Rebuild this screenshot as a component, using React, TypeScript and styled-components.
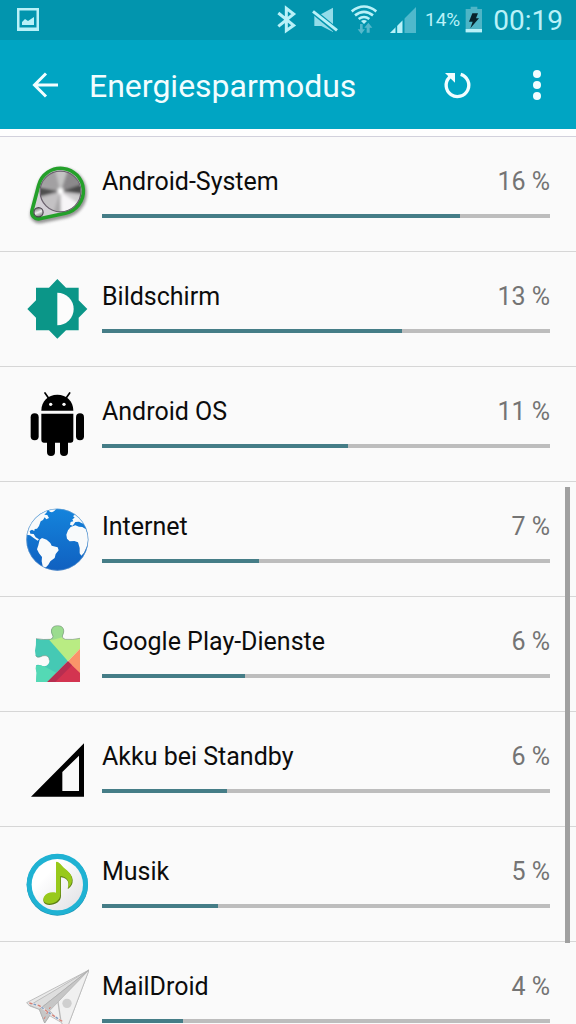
import React from "react";
import styled, { createGlobalStyle } from "styled-components";

const GlobalStyle = createGlobalStyle`
  *, *::before, *::after { box-sizing: border-box; }
  body { margin: 0; background: #fafafa; }
  body, button { font-family: Roboto, "Liberation Sans", sans-serif; }
`;

const Screen = styled.div`
  display: flex;
  flex-direction: column;
  height: 100vh;
  overflow: hidden;
  background: #fafafa;
`;

const StatusBar = styled.div`
  display: flex;
  flex: none;
  align-items: center;
  justify-content: space-between;
  height: 40px;
  padding: 0 13px 0 15px;
  background: #0295ae;
  color: #b9f1f8;
`;

const StatusGroup = styled.div`
  display: flex;
  align-items: center;
  gap: 13px;
`;

const StatusIcon = styled.svg`
  display: block;
  width: 26px;
  height: 30px;
`;

const Battery = styled.div`
  display: flex;
  align-items: center;
  gap: 5px;
  margin-left: -4px;
  font-size: 19px;
  line-height: 40px;
`;

const BatteryIcon = styled.svg`
  display: block;
  width: 18px;
  height: 30px;
`;

const Clock = styled.time`
  margin-left: -3px;
  padding-top: 2px;
  font-size: 28px;
  line-height: 38px;
`;

const AppBar = styled.header`
  display: flex;
  flex: none;
  align-items: center;
  height: 89px;
  padding: 0 15px 0 21px;
  background: #00a5c3;
  color: #f2fdff;
`;

const Title = styled.h1`
  flex: 1;
  margin: 0 0 0 20px;
  padding-top: 3px;
  font-size: 32px;
  font-weight: 400;
  line-height: 40px;
`;

const Actions = styled.div`
  display: flex;
  gap: 32px;
`;

const IconButton = styled.button`
  display: block;
  width: 48px;
  height: 48px;
  padding: 0;
  border: 0;
  background: none;
  color: inherit;

  svg { display: block; width: 48px; height: 48px; }
`;

const Content = styled.main`
  position: relative;
  flex: 1;
  min-height: 0;
  overflow: hidden;
`;

const Divider = styled.div`
  height: 8px;
  border-bottom: 1px solid #d2d1dc;
  background: #fefefe;
`;

const UsageList = styled.ul`
  margin: 0;
  padding: 0;
  list-style: none;
`;

const UsageRow = styled.li`
  display: flex;
  align-items: center;
  gap: 13px;
  height: 115px;
  padding: 0 26px 0 25px;
  border-bottom: 1px solid #d6d6d6;
`;

const AppIcon = styled.svg`
  display: block;
  flex: none;
  width: 64px;
  height: 64px;
`;

const Usage = styled.div`
  flex: 1;
  min-width: 0;
  padding-bottom: 5px;
`;

const UsageText = styled.div`
  display: flex;
  justify-content: space-between;
  margin-bottom: 16px;
  font-size: 25px;
  line-height: 32px;
`;

const Name = styled.label`
  color: #0c0c0c;
`;

const Percent = styled.span`
  color: #747474;
`;

const Meter = styled.progress`
  display: block;
  width: 100%;
  height: 4px;
  border: 0;
  appearance: none;
  background: #bdbdbd;

  &::-webkit-progress-bar { background: #bdbdbd; }
  &::-webkit-progress-value { background: #457d87; }
  &::-moz-progress-bar { background: #457d87; }
`;

const ScrollThumb = styled.div`
  position: absolute;
  top: 40%;
  right: 6px;
  width: 5px;
  height: 51%;
  background: #a0a0a0;
`;

const SystemIcon = () => (
  <AppIcon viewBox="0 0 64 64" aria-hidden="true">
    <defs>
      <clipPath id="disc"><circle cx="35.5" cy="29.5" r="20" /></clipPath>
      <filter id="soft" x="-20%" y="-20%" width="140%" height="140%"><feGaussianBlur stdDeviation="1.8" /></filter>
      <linearGradient id="knob" x1="0" y1="0" x2="0.4" y2="1">
        <stop offset="0" stopColor="#555" /><stop offset="0.6" stopColor="#eee" /><stop offset="1" stopColor="#888" />
      </linearGradient>
    </defs>
    <path d="M13.7 23.2A22.7 22.7 0 1 1 40.4 51.2L14.6 56.7A6.5 6.5 0 0 1 7 48.6Z" transform="translate(1 2)" fill="none" stroke="#666" strokeWidth="5" opacity=".7" filter="url(#soft)" />
    <path d="M13.7 23.2A22.7 22.7 0 1 1 40.4 51.2L14.6 56.7A6.5 6.5 0 0 1 7 48.6Z" fill="#d4d0d6" stroke="#24a02a" strokeWidth="3.6" />
    <g clipPath="url(#disc)">
      <rect x="14" y="8" width="44" height="44" fill="#b3b1b3" />
      <g filter="url(#soft)">
        <path d="M35.5 29.5L8 24V36Z" fill="#4e4e4e" />
        <path d="M35.5 29.5L62 20V32Z" fill="#4a4a4a" />
        <path d="M35.5 29.5L10 22V8L28 4Z" fill="#a2a0a2" />
        <path d="M35.5 29.5L44 4L60 8V20Z" fill="#8b898b" />
        <path d="M35.5 29.5L30 4H44Z" fill="#c4c4c4" />
        <path d="M35.5 29.5L10 38L14 60H26Z" fill="#c4c2c4" />
        <path d="M35.5 29.5L26 58H37Z" fill="#a9a7a9" />
        <path d="M35.5 29.5L36 58H54L58 44Z" fill="#f7f5f7" />
        <path d="M35.5 29.5L60 34V46Z" fill="#cfcdcf" />
        <circle cx="35.5" cy="29" r="3" fill="#fff" />
      </g>
    </g>
    <circle cx="35.5" cy="29.5" r="20.4" fill="none" stroke="#6a616d" strokeWidth="1.2" />
    <circle cx="13.5" cy="50.3" r="4.6" fill="url(#knob)" stroke="#4b454d" strokeWidth="1.2" />
  </AppIcon>
);

const DisplayIcon = () => (
  <AppIcon viewBox="75 51 192 192" aria-hidden="true">
    <path fill="#0b9688" d="M172 57L198 83H236V121L262 147L236 173V211H198L172 236L147 211H108V173L82 147L108 121V83H147Z" />
    <path fill="#fcfcfc" d="M172 98A49 49 0 0 1 172 196Z" />
  </AppIcon>
);

const AndroidIcon = () => (
  <AppIcon viewBox="75 51 192 192" aria-hidden="true">
    <path d="M124 107C124 78 144 59 172 59S220 78 220 107Z" />
    <path d="M135 54L146 70M209 54L198 70" stroke="#000" strokeWidth="5" strokeLinecap="round" />
    <circle cx="152" cy="88" r="5" fill="#fafafa" />
    <circle cx="192" cy="88" r="5" fill="#fafafa" />
    <path d="M124 116H220V196Q220 203 213 203H204V231A12 12 0 0 1 180 231V203H165V231A12 12 0 0 1 141 231V203H131Q124 203 124 196Z" />
    <rect x="92" y="115" width="24" height="81" rx="12" />
    <rect x="228" y="115" width="24" height="81" rx="12" />
  </AppIcon>
);

const GlobeIcon = () => (
  <AppIcon viewBox="75 51 192 192" aria-hidden="true">
    <defs>
      <linearGradient id="sea" x1="0" y1="0" x2="0" y2="1">
        <stop offset="0" stopColor="#1484dc" /><stop offset="1" stopColor="#1060c0" />
      </linearGradient>
      <clipPath id="globe"><circle cx="172" cy="149" r="92" /></clipPath>
    </defs>
    <circle cx="172" cy="149" r="93" fill="url(#sea)" />
    <g clipPath="url(#globe)" fill="#f8fafb">
      <path d="M76 55H138L141 66L133 74L142 75L147 84L139 88L134 82L129 90L122 94L117 108L111 116L104 117L103 123L96 119L89 123L91 131L101 132L107 142L117 148L113 152L101 144L90 136L76 134Z" />
      <path d="M145 57H168L163 63L156 67L149 65Z" />
      <path d="M119 149L126 144L140 149L151 159L155 167L173 172L176 181L167 192L164 204L151 214L145 224L138 232L129 233L125 214L126 201L117 190L111 178L115 166Z" />
      <path d="M216 66L232 72L249 91L255 102L246 100L237 95L226 96L218 107L210 104L212 96L220 94L217 88L224 83L219 78L225 74Z" />
      <path d="M212 111L226 106L237 110L247 111L258 118L266 142L262 166L252 188L244 197L239 190L239 174L234 157L223 153L209 154L201 146L199 134L204 121Z" />
    </g>
    <circle cx="172" cy="149" r="92" fill="none" stroke="#7ca7cf" strokeWidth="1.5" />
  </AppIcon>
);

const PlayIcon = () => (
  <AppIcon viewBox="75 51 192 192" aria-hidden="true">
    <defs>
      <clipPath id="puzzle">
        <path d="M108 101Q132 105 151 103Q160 101 159 93C149 75 156 62 173 62C190 62 196 76 187 93Q186 101 196 103Q218 105 240 100V231H108L110 203Q106 190 108 181Q113 178 122 181C138 189 149 178 148 166C148 153 136 148 122 155Q112 160 107 152L105 137Q109 122 108 101Z" />
      </clipPath>
    </defs>
    <g clipPath="url(#puzzle)">
      <path fill="#45c9b4" d="M100 55H155L204 169L140 234H100Z" />
      <path fill="#54d9b5" d="M100 185L125 180L170 204L140 234H100Z" />
      <path fill="#b9ec83" d="M140 55H245V126L204 169L146 103Z" />
      <path fill="#9bdc8f" d="M145 55H200V93L160 104H145Z" />
      <path fill="#fa9469" d="M204 169L241 130V207Z" />
      <path fill="#d33450" d="M204 169L241 205V232H141Z" />
      <path fill="#b62e50" d="M204 169L216 181L165 232H141Z" />
    </g>
    <path d="M108 101Q132 105 151 103Q160 101 159 93C149 75 156 62 173 62C190 62 196 76 187 93Q186 101 196 103Q218 105 240 100M148 166C148 153 136 148 122 155Q112 160 107 152" fill="none" stroke="#6d8878" strokeWidth="2.5" opacity=".7" />
  </AppIcon>
);

const SignalIcon = () => (
  <AppIcon viewBox="75 51 192 192" aria-hidden="true">
    <path fillRule="evenodd" d="M252 70V230H93ZM187 156V213H237V107Z" />
  </AppIcon>
);

const MusicIcon = () => (
  <AppIcon viewBox="75 51 192 192" aria-hidden="true">
    <defs>
      <linearGradient id="face" x1="0" y1="0" x2="1" y2="1">
        <stop offset="0.3" stopColor="#fff" /><stop offset="1" stopColor="#dfdfe3" />
      </linearGradient>
    </defs>
    <circle cx="172" cy="150" r="92" fill="#1b91b1" />
    <circle cx="172" cy="148" r="92" fill="#1fb2d3" />
    <circle cx="172" cy="149" r="77" fill="url(#face)" />
    <g>
      <path fill="#5c7f14" d="M168 84Q174 81 182 91C193 107 216 112 218 135Q219 152 203 163C209 145 206 130 183 127V181C184 200 166 210 148 210C132 210 126 198 133 187C140 176 154 172 168 176Z" />
      <path fill="#98c91b" d="M168 81Q174 78 182 88C193 104 214 110 216 132Q217 149 203 160C210 142 204 126 181 123V178C181 196 164 206 148 206C132 206 126 195 133 184C140 173 154 169 168 173Z" />
    </g>
  </AppIcon>
);

const MailIcon = () => (
  <AppIcon viewBox="75 399 192 192" aria-hidden="true">
    <defs>
      <linearGradient id="paper" x1="0" y1="0" x2="1" y2="1">
        <stop offset="0" stopColor="#d2d2d2" /><stop offset="0.5" stopColor="#f4f4f4" /><stop offset="1" stopColor="#dadada" />
      </linearGradient>
    </defs>
    <path d="M267 408L80 506L89 516L118 526L134 567L149 545L185 566L198 591Z" fill="url(#paper)" stroke="#b5b5b5" strokeWidth="2.5" strokeLinejoin="round" />
    <path d="M267 408L89 514L118 526Z" fill="#dedede" stroke="#ababab" strokeWidth="2" />
    <path d="M267 408L118 526L134 567L149 544Z" fill="#c6c6c6" stroke="#a6a6a6" strokeWidth="2" />
    <path d="M267 408L149 530L185 566L198 591Z" fill="#f0f0f0" stroke="#b1b1b1" strokeWidth="2" />
    <path d="M174 504L183 563" stroke="#b9b9b9" strokeWidth="4" />
    <circle cx="201" cy="508" r="14" fill="#cfcfcf" />
    <path d="M88 507L118 515L145 535L188 563" fill="none" stroke="#e9e5e5" strokeWidth="6" />
    <path d="M88 507L118 515L145 535L188 563" fill="none" stroke="#d58075" strokeWidth="4" strokeDasharray="10 16" />
    <path d="M88 507L118 515L145 535L188 563" fill="none" stroke="#7b9cc4" strokeWidth="4" strokeDasharray="8 18" strokeDashoffset="-13" />
    <path d="M132 555L151 519" stroke="#d58075" strokeWidth="3" strokeDasharray="8 9" />
  </AppIcon>
);

const apps = [
  { id: "system", name: "Android-System", percent: 16, level: 80, Icon: SystemIcon },
  { id: "display", name: "Bildschirm", percent: 13, level: 67, Icon: DisplayIcon },
  { id: "os", name: "Android OS", percent: 11, level: 55, Icon: AndroidIcon },
  { id: "internet", name: "Internet", percent: 7, level: 35, Icon: GlobeIcon },
  { id: "play", name: "Google Play-Dienste", percent: 6, level: 32, Icon: PlayIcon },
  { id: "standby", name: "Akku bei Standby", percent: 6, level: 28, Icon: SignalIcon },
  { id: "music", name: "Musik", percent: 5, level: 26, Icon: MusicIcon },
  { id: "mail", name: "MailDroid", percent: 4, level: 18, Icon: MailIcon },
];

export default function App() {
  return (
    <Screen>
      <GlobalStyle />
      <StatusBar>
        <StatusIcon viewBox="0 0 26 30" aria-hidden="true">
          <path fill="currentColor" fillRule="evenodd" d="M2 3H24V26H2ZM4.500 5.500V22.500H21.500V5.500Z" />
          <path fill="currentColor" d="M7 20V17L10 14L13 16L19 12V20Z" />
        </StatusIcon>
        <StatusGroup>
          <StatusIcon viewBox="40 15 78 90" aria-hidden="true">
            <path d="M56 39L102 76L80 92V25L102 42L56 79" fill="none" stroke="currentColor" strokeWidth="9" />
          </StatusIcon>
          <StatusIcon viewBox="156 15 78 90" aria-hidden="true">
            <path fill="#93dce9" d="M163 42H184L219 23V96L184 78H163Z" />
            <path d="M156 31L231 93" stroke="#0295ae" strokeWidth="17" />
            <path d="M159 34L231 91" stroke="currentColor" strokeWidth="9" />
          </StatusIcon>
          <StatusIcon viewBox="277 15 78 90" aria-hidden="true">
            <path d="M279 34Q316 5 353 34M289 46Q316 25 343 46M300 57Q316 45 332 57" fill="none" stroke="currentColor" strokeWidth="8" />
            <path fill="currentColor" d="M307 63Q316 57 325 63L316 72Z" />
            <path fill="#55b8cb" d="M304 72H312V88H319L308 102L297 88H304ZM324 98H333V83H341L329 68L317 83H324Z" />
          </StatusIcon>
          <StatusIcon viewBox="390 15 78 90" aria-hidden="true">
            <path fill="#4fb9cc" d="M468 21V99H390Z" />
            <path fill="currentColor" d="M427 62V99H390Z" />
            <path d="M409 70V100M431 55V100" stroke="#0295ae" strokeWidth="5" />
          </StatusIcon>
          <Battery>
            <span>14%</span>
            <BatteryIcon viewBox="616 15 54 90" aria-hidden="true">
              <path fill="#4fb5c6" d="M633 20H653V27H667V97H618V27H633Z" />
              <path fill="currentColor" d="M618 87H667V97H618Z" />
              <path fill="#07232b" d="M638 40H655L649 55H658L632 85L639 65H628Z" />
            </BatteryIcon>
          </Battery>
          <Clock>00:19</Clock>
        </StatusGroup>
      </StatusBar>
      <AppBar>
        <IconButton type="button" aria-label="Zurück">
          <svg viewBox="0 0 48 48" fill="none" stroke="currentColor" strokeWidth="3">
            <path d="M37 24H13M25 12.500L13.500 24L25 35.500" />
          </svg>
        </IconButton>
        <Title>Energiesparmodus</Title>
        <Actions>
          <IconButton type="button" aria-label="Aktualisieren">
            <svg viewBox="520 180 144 144">
              <path d="M603 220A34 34 0 1 1 569 229L577 224" fill="none" stroke="currentColor" strokeWidth="10" />
              <path fill="currentColor" d="M556 216H586V245Z" />
            </svg>
          </IconButton>
          <IconButton type="button" aria-label="Weitere Optionen">
            <svg viewBox="0 0 48 48" fill="currentColor">
              <circle cx="24" cy="13" r="4" />
              <circle cx="24" cy="24" r="4" />
              <circle cx="24" cy="35" r="4" />
            </svg>
          </IconButton>
        </Actions>
      </AppBar>
      <Content>
        <Divider />
        <UsageList>
          {apps.map(({ id, name, percent, level, Icon }) => (
            <UsageRow key={id}>
              <Icon />
              <Usage>
                <UsageText>
                  <Name htmlFor={id}>{name}</Name>
                  <Percent>{percent} %</Percent>
                </UsageText>
                <Meter id={id} max={100} value={level} />
              </Usage>
            </UsageRow>
          ))}
        </UsageList>
        <ScrollThumb />
      </Content>
    </Screen>
  );
}
